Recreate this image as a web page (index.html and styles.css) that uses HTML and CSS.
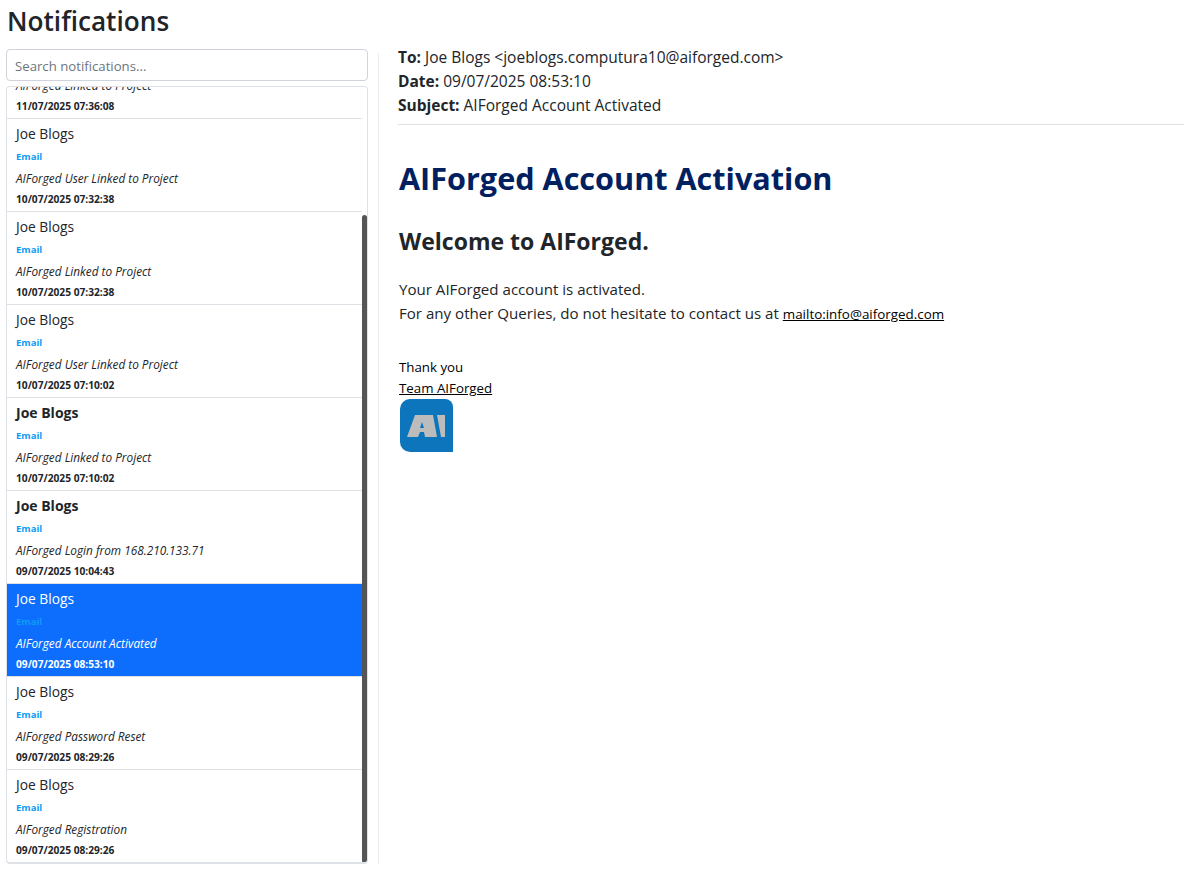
FILE: index.html
```html
<!DOCTYPE html>
<html lang="en">
<head>
<meta charset="utf-8">
<title>Notifications</title>
<link rel="stylesheet" href="styles.css">
</head>
<body>
<h1 class="page-title">Notifications</h1>
<div class="layout">
  <aside class="sidebar">
    <input class="search" type="text" placeholder="Search notifications...">
    <div class="list">
      <div class="list-scroll">
        <div class="item first"><div class="name">Joe Blogs</div><div class="type">Email</div><div class="subject">AIForged Linked to Project</div><div class="date">11/07/2025 07:36:08</div></div>
        <div class="item"><div class="name">Joe Blogs</div><div class="type">Email</div><div class="subject">AIForged User Linked to Project</div><div class="date">10/07/2025 07:32:38</div></div>
        <div class="item"><div class="name">Joe Blogs</div><div class="type">Email</div><div class="subject">AIForged Linked to Project</div><div class="date">10/07/2025 07:32:38</div></div>
        <div class="item"><div class="name">Joe Blogs</div><div class="type">Email</div><div class="subject">AIForged User Linked to Project</div><div class="date">10/07/2025 07:10:02</div></div>
        <div class="item"><div class="name unread">Joe Blogs</div><div class="type">Email</div><div class="subject">AIForged Linked to Project</div><div class="date">10/07/2025 07:10:02</div></div>
        <div class="item"><div class="name unread">Joe Blogs</div><div class="type">Email</div><div class="subject">AIForged Login from 168.210.133.71</div><div class="date">09/07/2025 10:04:43</div></div>
        <div class="item active"><div class="name">Joe Blogs</div><div class="type">Email</div><div class="subject">AIForged Account Activated</div><div class="date">09/07/2025 08:53:10</div></div>
        <div class="item"><div class="name">Joe Blogs</div><div class="type">Email</div><div class="subject">AIForged Password Reset</div><div class="date">09/07/2025 08:29:26</div></div>
        <div class="item"><div class="name">Joe Blogs</div><div class="type">Email</div><div class="subject">AIForged Registration</div><div class="date">09/07/2025 08:29:26</div></div>
      </div>
      <div class="thumb"></div>
    </div>
  </aside>
  <main class="detail">
    <header class="meta">
      <div><strong>To:</strong> Joe Blogs &lt;joeblogs.computura10@aiforged.com&gt;</div>
      <div><strong>Date:</strong> 09/07/2025 08:53:10</div>
      <div><strong>Subject:</strong> AIForged Account Activated</div>
    </header>
    <article class="mail">
      <h1 class="mail-title">AIForged Account Activation</h1>
      <h2 class="mail-welcome">Welcome to AIForged.</h2>
      <p class="mail-body">Your AIForged account is activated.<br>For any other Queries, do not hesitate to contact us at <a class="mail-link small" href="#">mailto:info@aiforged.com</a></p>
      <div class="signoff">
        <div>Thank you</div>
        <div><a class="mail-link" href="#">Team AIForged</a></div>
      </div>
      <svg class="logo" viewBox="0 0 54 54" width="54" height="54" aria-label="AIForged logo">
        <path d="M11 0H46A8 8 0 0 1 54 8V53H11A10 10 0 0 1 1 43V10A10 10 0 0 1 11 0Z" fill="#0c75bc"/>
        <path d="M8 38L16 16H34L38 38H26L25 33H21L19 38ZM23 23L21 29H25ZM38 16H46V38H42Z" fill="#bcbcbc" fill-rule="evenodd"/>
      </svg>
    </article>
  </main>
</div>
</body>
</html>
```
FILE: styles.css
```css
* { box-sizing: border-box; }
html, body { height: 100%; }
body {
  margin: 0;
  padding: 0 0 5px 6px;
  height: 869px;
  overflow: hidden;
  background: #fff;
  color: #212529;
  font-family: "Open Sans", "Noto Sans", sans-serif;
  font-size: 16px;
}
.page-title {
  margin: 0;
  padding-left: 1px;
  height: 49px;
  font-size: 26.2px;
  line-height: 43px;
  font-weight: 600;
}
.layout { display: flex; height: 815px; }
.sidebar {
  width: 372px;
  flex: none;
  display: flex;
  flex-direction: column;
  gap: 5px;
}
.search {
  width: 362px;
  height: 32px;
  flex: none;
  padding: 1px 8px 0;
  border: 1px solid #ced4da;
  border-radius: 4px;
  font-family: inherit;
  font-size: 13.2px;
  color: #212529;
  outline: none;
}
.search::placeholder { color: #6c757d; opacity: 1; }
.list {
  position: relative;
  width: 362px;
  height: 778px;
  border: 1px solid #dee2e6;
  border-bottom-width: 2px;
  border-radius: 4px;
  overflow: hidden;
}
.list-scroll { margin-top: -61px; padding-right: 5px; }
.item {
  height: 93px;
  padding: 4px 9px 0;
  border-bottom: 1px solid #dee2e6;
}
.name { font-size: 13.8px; line-height: 22px; height: 22px; margin-bottom: 1px; }
.name.unread { font-size: 14px; font-weight: 700; }
.type {
  font-size: 9.5px;
  font-weight: 700;
  line-height: 22px;
  height: 22px;
  color: #0d9bf7;
}
.subject { font-size: 11.8px; font-style: italic; line-height: 23px; height: 23px; margin-top: -1px; }
.date { font-size: 10.2px; font-weight: 700; line-height: 18px; height: 18px; }
.item.active { background: #0d6efd; color: #fff; }
.thumb {
  position: absolute;
  top: 128px;
  right: 0;
  width: 5px;
  height: 648px;
  background: #555;
  border-radius: 3px;
}
.detail {
  flex: 1;
  min-width: 0;
  margin-top: 4px;
  padding-left: 19px;
  border-left: 1px solid #e9ecef;
}
.meta {
  height: 80px;
  margin-top: -8px;
  border-bottom: 1px solid #dee2e6;
  font-size: 15.5px;
  line-height: 24px;
}
.meta strong { font-weight: 700; }
.mail { padding-left: 1px; }
.mail-title {
  margin: 32px 0 0;
  font-size: 30.6px;
  line-height: 42px;
  font-weight: 700;
  color: #002060;
}
.mail-welcome {
  margin: 27px 0 0;
  font-size: 23px;
  line-height: 30px;
  font-weight: 700;
}
.mail-body {
  margin: 21px 0 0;
  font-size: 15.1px;
  line-height: 24px;
}
.mail-link { color: #000; text-decoration: underline; }
.mail-link.small { font-size: 13.4px; }
.signoff {
  margin-top: 31px;
  font-size: 13.3px;
  line-height: 21px;
  color: #000;
}
.logo { display: block; }
```
